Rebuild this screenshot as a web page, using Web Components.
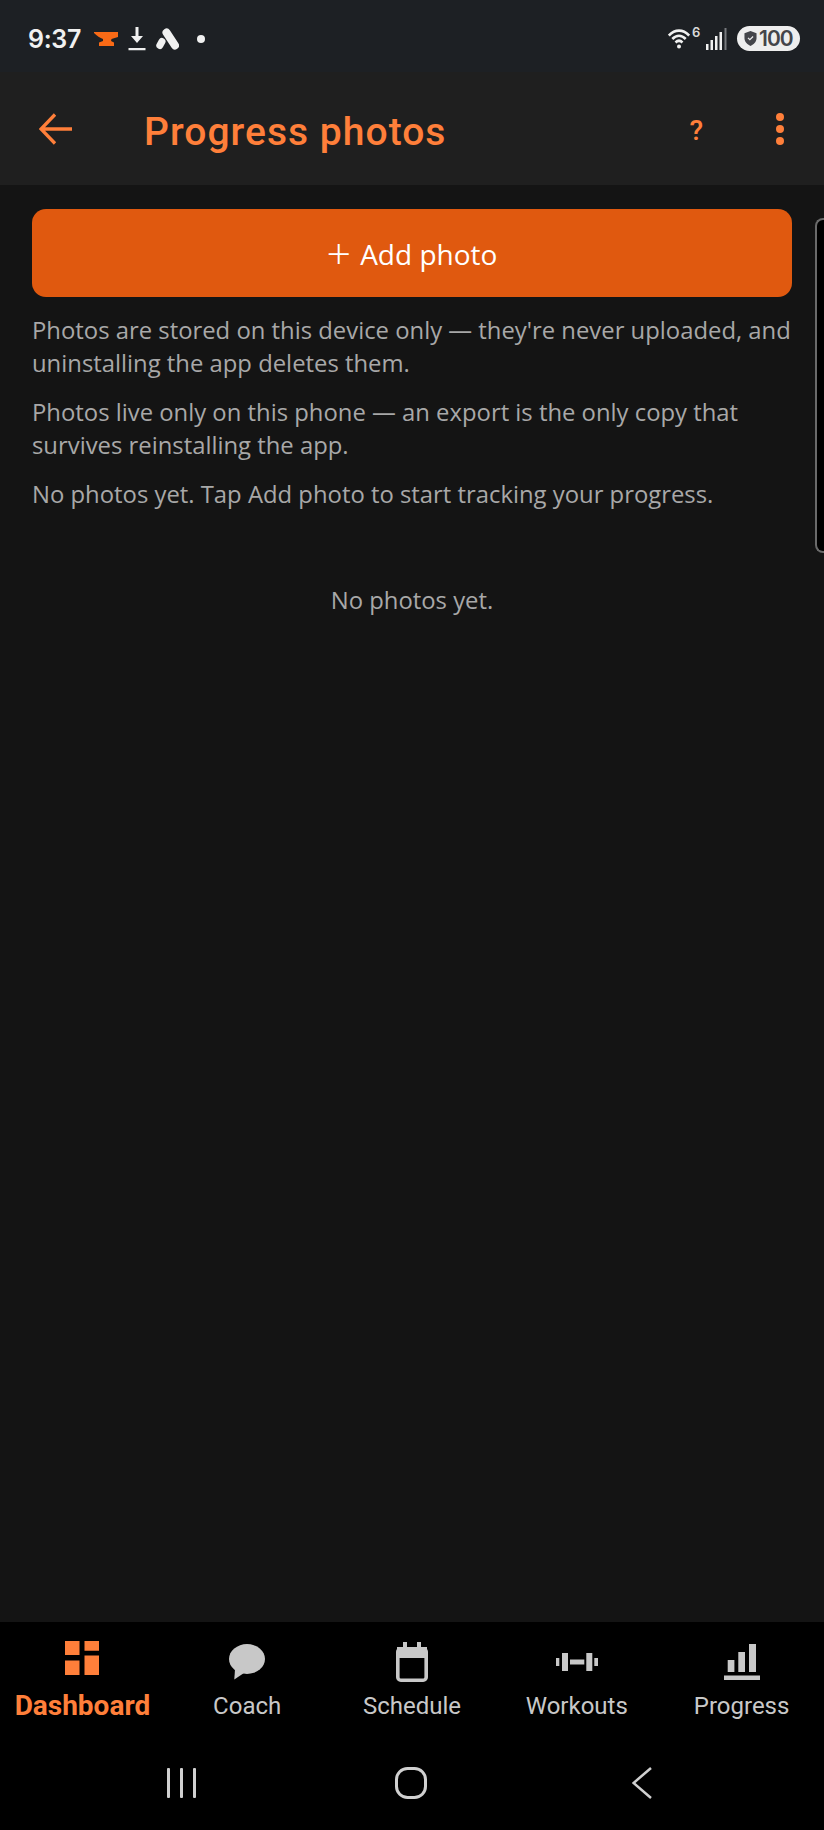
<!DOCTYPE html>
<html>
<head>
<meta charset="utf-8">
<style>
  html, body { margin: 0; padding: 0; background: #141414; }
  body { width: 824px; height: 1830px; overflow: hidden; display: flex; flex-direction: column; }
  photos-screen { flex: 1; }
</style>
</head>
<body>
<status-bar></status-bar>
<app-header title="Progress photos"></app-header>
<photos-screen>
  <add-button label="Add photo"></add-button>
  <p>Photos are stored on this device only — they're never uploaded, and uninstalling the app deletes them.</p>
  <p>Photos live only on this phone — an export is the only copy that survives reinstalling the app.</p>
  <p>No photos yet. Tap Add photo to start tracking your progress.</p>
</photos-screen>
<bottom-tabs></bottom-tabs>
<system-nav></system-nav>

<script>
class StatusBar extends HTMLElement {
  connectedCallback() {
    this.attachShadow({ mode: 'open' });
    this.shadowRoot.innerHTML = `
      <style>
        :host { display: flex; height: 72px; box-sizing: border-box; background: #1d2024; align-items: center; padding: 5px 24px 0 28px; color: #f0f0f0; font-family: Inter, Roboto, sans-serif; }
        .time { font-size: 25px; font-weight: 600; letter-spacing: -.3px; width: 66px; }
        .left { display: flex; align-items: center; flex: 1; }
        .right { display: flex; align-items: center; }
        svg { display: block; }
        .wifi-gen { width: 10px; margin-left: 2px; font-size: 13px; line-height: 13px; font-weight: 600; color: #d8d8d8; align-self: flex-start; }
        .batt { display: flex; align-items: center; height: 25px; width: 63px; box-sizing: border-box; padding-left: 7px; border-radius: 13px; background: #eeeeee; color: #44454a; font-size: 21px; font-weight: 600; letter-spacing: -1px; margin-left: 10px; }
      </style>
      <div class="left">
        <span class="time">9:37</span>
        <svg width="24" height="14" viewBox="0 0 24 14" style="margin-right:10px"><path fill="#f96a16" d="M0 0h24v5l-6.500 2-.5 2 3 1.500V14H5v-3.500l4-1.500V7C6 6 3 4 0 1z"/></svg>
        <svg width="18" height="24" viewBox="0 0 18 24" style="margin-right:10px"><path fill="#f0f0f0" d="M7.500 0h3v9H15l-6 7-6-7h4.500zM0.500 21h17v2.300h-17z"/></svg>
        <svg width="23" height="22" viewBox="0 0 23 22" style="margin-right:18px"><path fill="none" stroke="#f0f0f0" stroke-width="8" stroke-linecap="round" d="M10.500 4.500 19 17.500"/><path fill="none" stroke="#f0f0f0" stroke-width="7" stroke-linecap="round" d="M3.800 17.500 6 13.500"/></svg>
        <svg width="8" height="8" viewBox="0 0 8 8"><circle cx="4" cy="4" r="4" fill="#f0f0f0"/></svg>
      </div>
      <div class="right">
        <svg width="22" height="22" viewBox="0 0 22 22"><g fill="none" stroke="#f0f0f0" stroke-width="2.600"><path d="M.8 7.500C7 1 15 1 21.200 7.500"/><path d="M4.300 11C8.500 6.700 13.500 6.700 17.700 11"/><path d="M7.500 14.500c2.200-2.200 4.800-2.200 7 0"/></g><circle cx="11" cy="18.500" r="2" fill="#f0f0f0"/></svg>
        <span class="wifi-gen">6</span>
        <svg width="21" height="22" viewBox="0 0 21 22" style="margin-left:4px"><path fill="#f0f0f0" d="M0 16h2.500v6H0zM4.500 12h2.500v10H4.500zM9 8h2.500v14H9zM13.500 4H16v18h-2.500z"/><path fill="#77797d" d="M18.500 0H20.500v22H18.500z"/></svg>
        <div class="batt">
          <svg width="13" height="15" viewBox="0 0 14 16" style="margin-right:2px"><path fill="#44454a" d="M7 0l6.500 2.300v5.200c0 4-2.800 6.800-6.500 8.500C3.300 14.300.5 11.500.5 7.500V2.300z"/><path fill="none" stroke="#eeeeee" stroke-width="1.300" d="M4.300 7.300 6.300 9.300 9.800 5.800"/></svg>
          <span>100</span>
        </div>
      </div>`;
  }
}

class AppHeader extends HTMLElement {
  connectedCallback() {
    this.attachShadow({ mode: 'open' });
    this.shadowRoot.innerHTML = `
      <style>
        :host { display: flex; height: 113px; box-sizing: border-box; background: #1f1f1f; align-items: center; color: #ff7f3a; font-family: Roboto, sans-serif; }
        .back { margin-left: 39px; width: 105px; flex: none; }
        h1 { flex: 1; margin: 6px 0 0; font-size: 39px; font-weight: 500; letter-spacing: 1.030px; }
        .help { font-size: 28px; font-weight: 500; margin-right: 73px; margin-top: 3px; }
        svg { display: block; }
        .more { margin-right: 40px; }
      </style>
      <div class="back"><svg width="33" height="32" viewBox="0 0 33 32"><path fill="none" stroke="#ff7f3a" stroke-width="3.300" d="M33 16H3M16 1.500 2 16l14 14.500"/></svg></div>
      <h1>${this.getAttribute('title')}</h1>
      <span class="help">?</span>
      <svg class="more" width="8" height="32" viewBox="0 0 8 32"><circle cx="4" cy="4" r="4" fill="#ff7f3a"/><circle cx="4" cy="16" r="4" fill="#ff7f3a"/><circle cx="4" cy="28" r="4" fill="#ff7f3a"/></svg>`;
  }
}

class PhotosScreen extends HTMLElement {
  connectedCallback() {
    this.attachShadow({ mode: 'open' });
    this.shadowRoot.innerHTML = `
      <style>
        :host { display: block; position: relative; box-sizing: border-box; padding: 24px 32px 0; font-family: "Open Sans", sans-serif; color: #a8a8a8; font-size: 23.850px; line-height: 33px; }
        ::slotted(p) { margin: 0 0 16px; }
        .empty { text-align: center; margin-top: 73px; }
        /* peek of the drawer at the screen edge */
        .edge { position: absolute; right: 0; top: 33px; width: 9px; height: 335px; box-sizing: border-box; background: #000; border: 2px solid #6a6a6a; border-right: 0; border-radius: 8px 0 0 8px; }
      </style>
      <slot></slot>
      <div class="empty">No photos yet.</div>
      <div class="edge"></div>`;
  }
}

class AddButton extends HTMLElement {
  connectedCallback() {
    this.attachShadow({ mode: 'open' });
    this.shadowRoot.innerHTML = `
      <style>
        :host { display: flex; height: 88px; box-sizing: border-box; padding-top: 2px; margin-bottom: 17px; align-items: center; justify-content: center; background: #e0590f; border-radius: 14px; color: #fff; font-family: "Open Sans", sans-serif; font-size: 28px; }
        .plus { font-size: 43px; line-height: 1; font-weight: 300; margin-right: 9px; margin-top: -3px; }
      </style>
      <span class="plus">+</span><span>${this.getAttribute('label')}</span>`;
  }
}

const TAB_ICONS = {
  dashboard: `<svg style="margin-bottom:8px" width="34" height="34" viewBox="0 0 34 34" fill="#ff7f3a"><path d="M0 0h14.500v14H0zM19.500 0H34v9.700H19.500zM0 19.500h14.500V34H0zM19.500 14.500H34V34H19.500z"/></svg>`,
  coach: `<svg width="36" height="36" viewBox="0 0 36 36" fill="#c8c8c8"><ellipse cx="18" cy="15" rx="18" ry="15"/><path d="M6 25l-.7 10.500L15 29z"/></svg>`,
  schedule: `<svg width="32" height="40" viewBox="0 0 32 40"><rect x="1.800" y="6.800" width="28.400" height="31.400" rx="3" fill="none" stroke="#c8c8c8" stroke-width="3.600"/><path fill="#c8c8c8" d="M1 5h30v11H1zM7 0h4v7H7zM21 0h4v7h-4z"/></svg>`,
  workouts: `<svg width="42" height="18" viewBox="0 0 42 18" fill="#c8c8c8"><path d="M0 5h3.300v8H0zM6 0h6v18H6zM14 6.500h14.300v5H14zM30.300 0h6v18h-6zM38.300 5H42v8h-3.700z"/></svg>`,
  progress: `<svg width="36" height="36" viewBox="0 0 36 36" fill="#c8c8c8"><path d="M3.700 16h6.700v12H3.700zM14.300 8H21v20h-6.700zM25 0h7v28h-7zM0 31.500h36V36H0z"/></svg>`
};

class BottomTabs extends HTMLElement {
  connectedCallback() {
    this.attachShadow({ mode: 'open' });
    const tabs = [['dashboard', 'Dashboard'], ['coach', 'Coach'], ['schedule', 'Schedule'], ['workouts', 'Workouts'], ['progress', 'Progress']];
    this.shadowRoot.innerHTML = `
      <style>
        :host { display: grid; grid-template-columns: repeat(5, 1fr); height: 110px; box-sizing: border-box; padding: 18px 0 0; background: #000; font-family: Roboto, sans-serif; color: #c8c8c8; font-size: 24px; line-height: 28px; }
        .tab { display: flex; flex-direction: column; align-items: center; }
        .icon { height: 44px; display: flex; align-items: center; justify-content: center; margin-bottom: 8px; }
        .tab.active { color: #ff7f3a; font-weight: 700; font-size: 28px; }
      </style>
      ${tabs.map(([key, label], i) => `<div class="tab${i === 0 ? ' active' : ''}"><div class="icon">${TAB_ICONS[key]}</div><span>${label}</span></div>`).join('')}`;
  }
}

class SystemNav extends HTMLElement {
  connectedCallback() {
    this.attachShadow({ mode: 'open' });
    this.shadowRoot.innerHTML = `
      <style>
        :host { display: flex; height: 98px; background: #000; justify-content: space-between; align-items: center; box-sizing: border-box; padding: 4px 172px 0 167px; }
        svg { display: block; }
      </style>
      <svg width="29" height="30" viewBox="0 0 29 30" fill="#d0d0d0"><rect x="0" width="3" height="30" rx="1"/><rect x="13" width="3" height="30" rx="1"/><rect x="26" width="3" height="30" rx="1"/></svg>
      <svg width="32" height="32" viewBox="0 0 32 32"><rect x="1.500" y="1.500" width="29" height="29" rx="11" fill="none" stroke="#d0d0d0" stroke-width="3"/></svg>
      <svg style="margin-left:6px" width="20" height="32" viewBox="0 0 20 32"><path fill="none" stroke="#d0d0d0" stroke-width="2.500" d="M19 1 1.500 16 19 31"/></svg>`;
  }
}

customElements.define('status-bar', StatusBar);
customElements.define('app-header', AppHeader);
customElements.define('photos-screen', PhotosScreen);
customElements.define('add-button', AddButton);
customElements.define('bottom-tabs', BottomTabs);
customElements.define('system-nav', SystemNav);
</script>
</body>
</html>
